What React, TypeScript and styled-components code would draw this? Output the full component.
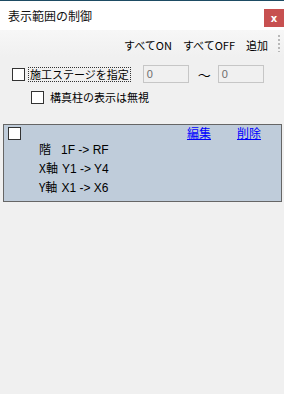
import React from 'react';
import styled, { createGlobalStyle } from 'styled-components';

const GlobalStyle = createGlobalStyle`
  html, body {
    margin: 0;
    padding: 0;
    background: #f0f0f0;
  }
  body {
    font-family: "Noto Sans CJK JP", "Noto Sans", sans-serif;
    font-size: 11px;
    color: #000;
  }
`;

const Window = styled.div`
  width: 284px;
  height: 394px;
  background: #f0f0f0;
  display: flex;
  flex-direction: column;
  overflow: hidden;
`;

const TopEdge = styled.div`
  height: 1px;
  background: #1d4b63;
`;

const TitleBar = styled.div`
  height: 29px;
  background: #fff;
  display: flex;
  align-items: flex-start;
  justify-content: space-between;
  padding-left: 8px;
`;

const Title = styled.span`
  font-size: 12px;
  line-height: 12px;
  margin-top: 9px;
  color: #111;
`;

const CloseButton = styled.div`
  width: 20px;
  height: 18px;
  margin-top: 8px;
  background: #c75050;
  color: #fff;
  font-family: "DejaVu Sans", sans-serif;
  font-weight: bold;
  font-size: 10px;
  display: flex;
  align-items: center;
  justify-content: center;
`;

const Toolbar = styled.div`
  height: 27px;
  background: linear-gradient(#f7f7f7, #f0f0f0);
  display: flex;
  align-items: center;
  justify-content: flex-end;
  padding-right: 4px;
`;

const ToolButton = styled.span`
  font-size: 11px;
  margin-left: 11px;
  margin-top: 2px;
`;

const Grip = styled.div`
  width: 2px;
  height: 17px;
  margin-left: 10px;
  background: repeating-linear-gradient(#b8b8b8 0 2px, transparent 2px 4px);
`;

const Content = styled.div`
  display: flex;
  flex-direction: column;
`;

const Row = styled.div<{ $indent: number; $top: number }>`
  display: flex;
  align-items: center;
  margin-left: ${p => p.$indent}px;
  margin-top: ${p => p.$top}px;
  height: 18px;
`;

const Box = styled.span`
  width: 11px;
  height: 11px;
  border: 1px solid #333;
  background: #fff;
  flex: none;
`;

const Label = styled.span<{ $focus?: boolean }>`
  margin-left: ${p => (p.$focus ? 3 : 4)}px;
  padding: 0 1px;
  line-height: 13px;
  border: 1px dotted ${p => (p.$focus ? '#333' : 'transparent')};
`;

const NumberInput = styled.div<{ $left: number }>`
  width: 41px;
  height: 16px;
  margin-left: ${p => p.$left}px;
  border: 1px solid #c6c6c6;
  background: #f0f0f0;
  color: #6d6d6d;
  font-family: "Liberation Sans", sans-serif;
  font-size: 11px;
  line-height: 16px;
  padding-left: 3px;
  box-sizing: content-box;
`;

const Tilde = styled.span`
  margin-left: 9px;
  font-size: 13px;
`;

const Card = styled.div`
  margin: 18px 0 0 3px;
  width: 277px;
  height: 76px;
  border: 1px solid #666;
  background: #bfccda;
  display: flex;
  flex-direction: column;
`;

const CardHead = styled.div`
  display: flex;
  align-items: flex-start;
  height: 12px;
  padding-left: 4px;
  padding-top: 2px;
  flex: none;
`;

const Links = styled.div`
  margin-left: auto;
  display: flex;
  gap: 26px;
  margin-right: 20px;
  margin-top: -3px;
  font-size: 12px;
`;

const Link = styled.a`
  color: #0000ff;
  text-decoration: underline;
  cursor: pointer;
`;

const InfoLine = styled.div`
  flex: none;
  margin-left: 35px;
  height: 19px;
  line-height: 19px;
  font-size: 12px;
  font-family: "Liberation Sans", "Noto Sans CJK JP", sans-serif;
`;

const InfoKey = styled.span<{ $wide?: boolean }>`
  font-family: "Noto Sans CJK JP", sans-serif;
  margin-right: ${p => (p.$wide ? 10 : 4)}px;
`;

const rows = [
  { key: '階', wide: true, text: '1F -> RF' },
  { key: 'X軸', text: 'Y1 -> Y4' },
  { key: 'Y軸', text: 'X1 -> X6' },
];

export default function App() {
  return (
    <Window>
      <GlobalStyle />
      <TopEdge />
      <TitleBar>
        <Title>表示範囲の制御</Title>
        <CloseButton>x</CloseButton>
      </TitleBar>
      <Toolbar>
        <ToolButton>すべてON</ToolButton>
        <ToolButton>すべてOFF</ToolButton>
        <ToolButton>追加</ToolButton>
        <Grip />
      </Toolbar>
      <Content>
        <Row $indent={12} $top={8}>
          <Box />
          <Label $focus>施工ステージを指定</Label>
          <NumberInput $left={12}>0</NumberInput>
          <Tilde>〜</Tilde>
          <NumberInput $left={7}>0</NumberInput>
        </Row>
        <Row $indent={31} $top={5}>
          <Box />
          <Label>構真柱の表示は無視</Label>
        </Row>
        <Card>
          <CardHead>
            <Box />
            <Links>
              <Link>編集</Link>
              <Link>削除</Link>
            </Links>
          </CardHead>
          {rows.map(r => (
            <InfoLine key={r.key}>
              <InfoKey $wide={r.wide}>{r.key}</InfoKey>
              {r.text}
            </InfoLine>
          ))}
        </Card>
      </Content>
    </Window>
  );
}
